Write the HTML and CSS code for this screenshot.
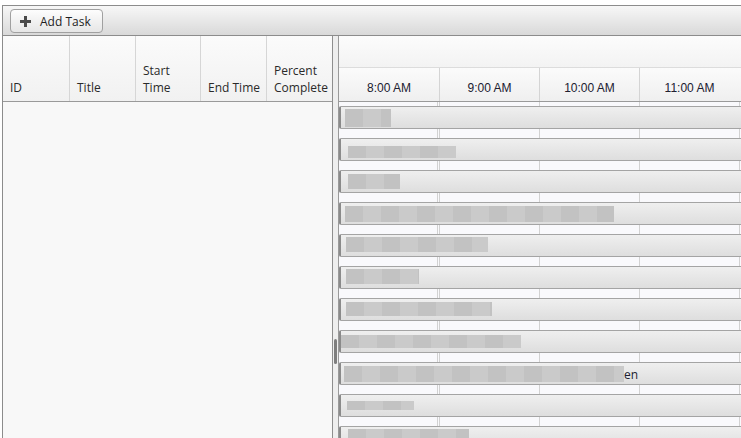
FILE: index.html
```html
<!DOCTYPE html>
<html lang="en">
<head>
    <meta charset="UTF-8">
    <meta name="viewport" content="width=device-width, initial-scale=1.0">
    <title>Gantt</title>
    <link rel="stylesheet" href="styles.css">
</head>
<body>
    <div class="app">
        <!-- Toolbar -->
        <div class="toolbar">
            <button class="add-button">
                <svg class="plus" width="11" height="11" viewBox="0 0 11 11">
                    <path d="M4 0h3v4h4v3h-4v4h-3v-4h-4v-3h4z" fill="#4a4a4a"/>
                </svg>
                <span>Add Task</span>
            </button>
        </div>

        <div class="main">
            <!-- Task table -->
            <div class="task-table">
                <div class="table-head">
                    <div class="th col-id">ID</div>
                    <div class="th col-title">Title</div>
                    <div class="th col-start">Start<br>Time</div>
                    <div class="th col-end">End Time</div>
                    <div class="th col-pct">Percent<br>Complete</div>
                </div>
                <div class="table-body"></div>
            </div>

            <!-- Splitter -->
            <div class="splitter">
                <div class="grip"></div>
            </div>

            <!-- Chart -->
            <div class="chart">
                <div class="chart-head">
                    <div class="head-top"></div>
                    <div class="head-times">
                        <div class="tc">8:00 AM</div>
                        <div class="tc">9:00 AM</div>
                        <div class="tc">10:00 AM</div>
                        <div class="tc">11:00 AM</div>
                    </div>
                </div>
                <div class="chart-body">
                    <div class="bar"><span class="blur" style="margin-left:4px;margin-top:2px;width:46px;height:18px"></span></div>
                    <div class="bar"><span class="blur" style="margin-left:7px;margin-top:7px;width:108px;height:12px"></span></div>
                    <div class="bar"><span class="blur" style="margin-left:7px;margin-top:3px;width:52px;height:15px"></span></div>
                    <div class="bar"><span class="blur" style="margin-left:4px;margin-top:3px;width:269px;height:16px"></span></div>
                    <div class="bar"><span class="blur" style="margin-left:5px;margin-top:2px;width:142px;height:15px"></span></div>
                    <div class="bar"><span class="blur" style="margin-left:5px;margin-top:2px;width:73px;height:15px"></span></div>
                    <div class="bar"><span class="blur" style="margin-left:5px;margin-top:3px;width:146px;height:14px"></span></div>
                    <div class="bar"><span class="blur" style="margin-left:0;margin-top:4px;width:180px;height:13px"></span></div>
                    <div class="bar"><span class="blur" style="margin-left:3px;margin-top:3px;width:280px;height:16px"></span><span class="bar-text">en</span></div>
                    <div class="bar"><span class="blur" style="margin-left:6px;margin-top:6px;width:67px;height:9px"></span></div>
                    <div class="bar"><span class="blur" style="margin-left:7px;margin-top:2px;width:121px;height:14px"></span></div>
                </div>
            </div>
        </div>
    </div>
</body>
</html>
```

FILE: styles.css
```css
/* Общие стили */
body {
    margin: 0;
    background-color: #ffffff;
    font-family: "Open Sans", "Noto Sans", sans-serif;
    overflow: hidden;
}
.app {
    margin-top: 5px;
    margin-left: 2px;
    height: 433px;
    border-top: 1px solid #8c8c8c;
    border-left: 1px solid #8c8c8c;
    display: flex;
    flex-direction: column;
}
/* Панель инструментов */
.toolbar {
    height: 30px;
    flex-shrink: 0;
    border-bottom: 1px solid #8c8c8c;
    background: linear-gradient(#f7f7f7, #d9d9d9);
    padding: 3px 0 0 7px;
    box-sizing: border-box;
}
.add-button {
    height: 24px;
    width: 93px;
    display: flex;
    align-items: center;
    padding: 0 0 0 9px;
    border: 1px solid #a0a0a0;
    border-radius: 4px;
    background: linear-gradient(#fdfdfd, #e6e6e6);
    font-family: "Open Sans", sans-serif;
    font-size: 12px;
    color: #1e1e1e;
}
.plus {
    margin-right: 9px;
}
/* Основная область */
.main {
    flex: 1;
    display: flex;
    min-height: 0;
}
/* Таблица задач */
.task-table {
    width: 329px;
    flex-shrink: 0;
    display: flex;
    flex-direction: column;
}
.table-head {
    height: 65px;
    flex-shrink: 0;
    display: flex;
    border-bottom: 1px solid #9a9a9a;
    background: linear-gradient(#fbfbfb, #f1f1f1);
}
.th {
    width: 66px;
    box-sizing: border-box;
    border-right: 1px solid #d6d6d6;
    display: flex;
    align-items: flex-end;
    padding: 0 0 5px 7px;
    font-size: 12px;
    line-height: 17px;
    color: #2a2a2a;
}
.col-id {
    width: 67px;
}
.col-start {
    width: 65px;
}
.col-pct {
    width: 65px;
    border-right: none;
}
.table-body {
    flex: 1;
    background-color: #f8f8f8;
}
/* Разделитель */
.splitter {
    width: 7px;
    flex-shrink: 0;
    box-sizing: border-box;
    border-left: 1px solid #8e8e8e;
    border-right: 1px solid #9a9a9a;
    background-color: #eeeeee;
    display: flex;
    align-items: flex-start;
    justify-content: center;
}
.grip {
    width: 3px;
    height: 25px;
    margin-top: 303px;
    border-radius: 2px;
    background-color: #7e7e7e;
}
/* Диаграмма */
.chart {
    flex: 1;
    overflow: hidden;
    display: flex;
    flex-direction: column;
}
.chart-head {
    height: 65px;
    flex-shrink: 0;
    border-bottom: 1px solid #9a9a9a;
    display: flex;
    flex-direction: column;
}
.head-top {
    height: 31px;
    flex-shrink: 0;
    border-bottom: 1px solid #dcdcdc;
    background: linear-gradient(#fcfcfc, #f3f3f3);
}
.head-times {
    flex: 1;
    display: flex;
    background: linear-gradient(#fbfbfb, #efefef);
}
.tc {
    width: 100px;
    flex-shrink: 0;
    box-sizing: border-box;
    border-left: 1px solid #d4d4d4;
    display: flex;
    align-items: flex-end;
    justify-content: center;
    padding-bottom: 6px;
    font-family: "Liberation Sans", Arial, sans-serif;
    font-size: 12px;
    line-height: 14px;
    color: #202030;
}
.tc:first-child {
    border-left: none;
}
.chart-body {
    flex: 1;
    padding-top: 4px;
    background-color: #f9f9fc;
    background-image: repeating-linear-gradient(90deg, #d2d2d2 0, #d2d2d2 1px, transparent 1px, transparent 100px);
    background-position: 100px 0;
}
/* Полосы задач */
.bar {
    width: 430px;
    height: 23px;
    margin-bottom: 9px;
    box-sizing: border-box;
    border: 1px solid #a4a4a4;
    border-left: 2px solid #8a8a8a;
    border-radius: 2px 0 0 2px;
    background: linear-gradient(#efefef, #dedede);
    display: flex;
    align-items: flex-start;
}
.blur {
    display: block;
    flex-shrink: 0;
    background-color: #c6c6c6;
    background-image: repeating-linear-gradient(90deg, #c2c2c2 0, #c2c2c2 18px, #cacaca 18px, #cacaca 36px);
}
.bar-text {
    font-family: "Open Sans", sans-serif;
    font-size: 12px;
    line-height: 20px;
    padding-top: 2px;
    color: #202030;
}
```
